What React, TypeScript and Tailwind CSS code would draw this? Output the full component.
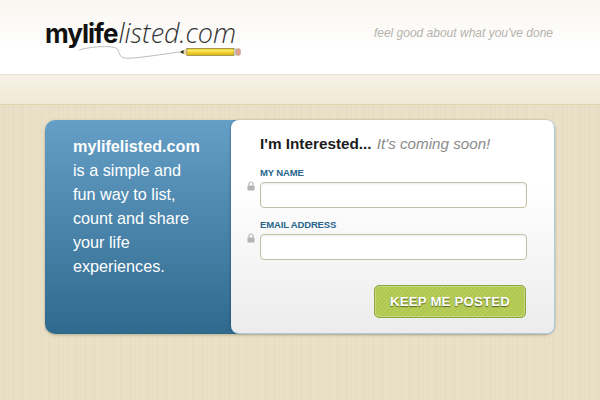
import React from 'react';

const sans = 'font-["Liberation_Sans",Arial,sans-serif]';

function Pencil() {
  return (
    <svg className="absolute left-[34px] top-[27px]" width="165" height="18" viewBox="0 0 165 18" fill="none">
      <path d="M0 5 C10 2 24 1 33 2 C41 3 39 7 41 10 C43 15 54 13 64 12 C80 10 92 8 101 7" stroke="#bdbdbd" strokeWidth="1" />
      <path d="M101 7 L108 3 L108 11 Z" fill="#e9d9a8" />
      <path d="M101 7 L104.5 5 L104.5 9 Z" fill="#222" />
      <rect x="108" y="3.5" width="47" height="7" fill="#f4d52f" stroke="#6b6428" strokeWidth="0.6" />
      <rect x="108" y="5" width="47" height="1.2" fill="#fbeb74" />
      <rect x="108" y="8.6" width="47" height="1" fill="#d3ab1c" />
      <rect x="155" y="3.5" width="2.5" height="7" fill="#c9c9c9" />
      <rect x="157" y="3.5" width="4.5" height="7" rx="2" fill="#e2a08a" stroke="#998" strokeWidth="0.4" />
    </svg>
  );
}

function LockIcon() {
  return (
    <svg className="absolute left-[-13px] top-[14px]" width="8" height="10" viewBox="0 0 8 10" fill="none">
      <path d="M2 4.5 V3 a2 2 0 0 1 4 0 V4.5" stroke="#b4b4b4" strokeWidth="1.2" />
      <rect x="0.5" y="4.5" width="7" height="5" rx="0.8" fill="#b4b4b4" />
    </svg>
  );
}

function Field({ label }: { label: string }) {
  return (
    <div className="relative">
      <div className={`text-[9.5px] leading-[12px] font-bold tracking-[-0.15px] text-[#27658c] ${sans}`}>{label}</div>
      <LockIcon />
      <input className="mt-[3px] block h-[26px] w-[267px] rounded-[4px] border border-[#c5bfa3] bg-white shadow-[inset_0_1px_2px_rgba(0,0,0,0.08)]" />
    </div>
  );
}

export default function App() {
  return (
    <div className={`flex h-[400px] w-[600px] flex-col overflow-hidden ${sans} bg-[#e9e0c6]`}>
      <header className="flex h-[75px] items-start justify-between border-b border-[#e6e1d4] bg-gradient-to-b from-[#f9f6f0] via-white via-[65%] to-white">
        <div className="relative ml-[45px] mt-[18px] flex h-[50px] items-baseline">
          <span className="font-['Inter',sans-serif] text-[26px] leading-[30px] font-bold tracking-[-1px] text-[#111]">mylife</span>
          <span className="ml-[1px] font-['Open_Sans',sans-serif] text-[27px] leading-[30px] font-light italic text-[#333]">listed.com</span>
          <Pencil />
        </div>
        <p className="mr-[47px] mt-[25px] text-[12px] leading-[16px] italic text-[#b5b3ae]">feel good about what you've done</p>
      </header>

      <div className="h-[30px] border-b border-[#e3d2ae] bg-gradient-to-b from-[#f7f2e5] to-[#f1e9d7]" />

      <main className="flex-1 bg-[repeating-linear-gradient(90deg,#e9e0c8_0px,#e7dec4_1px,#eae2ca_2px,#e8dfc6_3px,#e6ddc2_5px,#e9e1c9_6px,#e8dfc6_9px)] pl-[45px] pt-[15px]">
        <section className="flex h-[214px] w-[510px] rounded-[10px] bg-gradient-to-b from-[#659fc7] to-[#2f6a8e] shadow-[0_1px_3px_rgba(90,70,30,0.35)]">
          <div className="w-[186px] pl-[28px] pt-[14px] text-[16.2px] leading-[24px] text-white">
            <strong className="font-bold">mylifelisted.com</strong>
            <br />
            is a simple and
            <br />
            fun way to list,
            <br />
            count and share
            <br />
            your life
            <br />
            experiences.
          </div>
          <div className="h-[214px] w-[324px] rounded-[8px] border-r border-b border-[#a9cbe3] bg-gradient-to-b from-white from-[30%] to-[#ececec] pl-[29px] pt-[14px] shadow-[-1px_0_2px_rgba(0,0,0,0.2)]">
            <h2 className="text-[15.3px] leading-[20px] font-bold text-[#1c1c1c]">
              I'm Interested...{' '}
              <span className="ml-[1px] text-[15.2px] font-normal italic text-[#8b8b8b]">It's coming soon!</span>
            </h2>
            <div className="mt-[13px] flex flex-col gap-[11px]">
              <Field label="MY NAME" />
              <Field label="EMAIL ADDRESS" />
            </div>
            <div className="mt-[25px] flex justify-end pr-[28px]">
              <button className="h-[33px] w-[152px] rounded-[5px] border border-[#8fa63f] bg-[#b3ca55] bg-[repeating-linear-gradient(135deg,#b9cf5c_0px,#b9cf5c_1px,#aec650_2px,#aec650_3px)] text-[13.2px] font-bold tracking-[0.2px] text-white shadow-[inset_0_0_0_1px_rgba(255,255,255,0.25)] [text-shadow:0_1px_1px_rgba(60,70,10,0.8)]">
                KEEP ME POSTED
              </button>
            </div>
          </div>
        </section>
      </main>
    </div>
  );
}
